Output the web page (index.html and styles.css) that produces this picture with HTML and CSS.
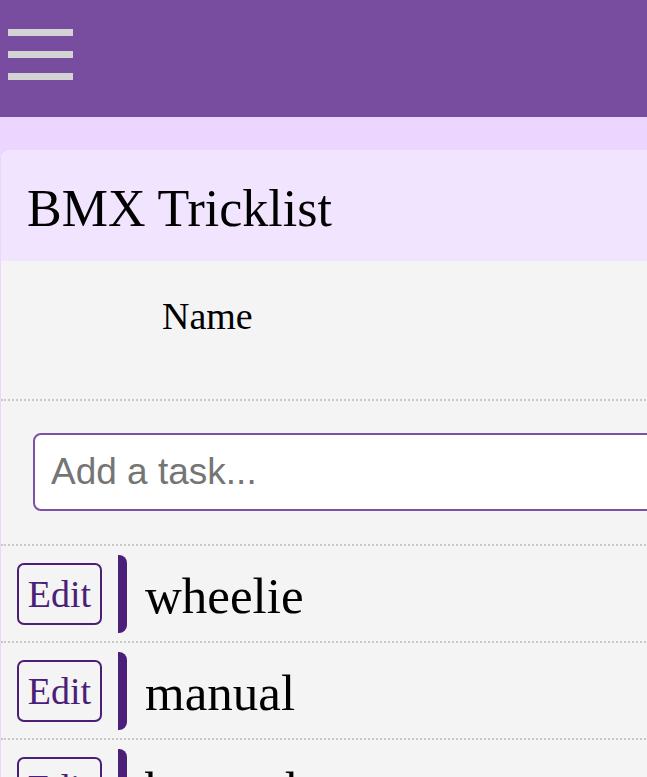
FILE: index.html
```html
<!DOCTYPE html>
<html lang="en">
<head>
<meta charset="utf-8">
<title>BMX Tricklist</title>
<link rel="stylesheet" href="styles.css">
</head>
<body>
<header class="topbar">
  <button class="menu" aria-label="Menu">
    <span class="menu-bar"></span>
    <span class="menu-bar"></span>
    <span class="menu-bar"></span>
  </button>
</header>
<main class="page">
  <section class="card">
    <h1 class="card-title">BMX Tricklist</h1>
    <div class="list">
      <div class="list-head">Name</div>
      <div class="add-row">
        <input class="add-input" type="text" placeholder="Add a task...">
      </div>
      <div class="item">
        <button class="edit-btn">Edit</button>
        <span class="item-bar"></span>
        <span class="item-name">wheelie</span>
      </div>
      <div class="item">
        <button class="edit-btn">Edit</button>
        <span class="item-bar"></span>
        <span class="item-name">manual</span>
      </div>
      <div class="item">
        <button class="edit-btn">Edit</button>
        <span class="item-bar"></span>
        <span class="item-name">bunny hop</span>
      </div>
    </div>
  </section>
</main>
</body>
</html>
```

FILE: styles.css
```css
html, body {
  margin: 0;
  padding: 0;
  overflow: hidden;
  background: #ecd5ff;
  font-family: "Liberation Serif", "Times New Roman", serif;
}

.topbar {
  height: 117px;
  background: #784c9e;
  box-sizing: border-box;
  padding: 29px 0 0 8px;
}

.menu {
  display: flex;
  flex-direction: column;
  gap: 15px;
  padding: 0;
  margin: 0;
  border: 0;
  background: transparent;
}

.menu-bar {
  display: block;
  width: 65px;
  height: 7px;
  background: #d3d3d3;
}

.page {
  padding-top: 33px;
  padding-left: 1px;
}

.card {
  background: #f4f4f4;
  border-top-left-radius: 9px;
  overflow: hidden;
  width: 720px;
}

.card-title {
  margin: 0;
  background: #f1e4ff;
  font-weight: normal;
  font-size: 52px;
  line-height: 58px;
  height: 111px;
  box-sizing: border-box;
  padding: 30px 0 0 26px;
  color: #000;
}

.list-head {
  height: 140px;
  box-sizing: border-box;
  padding: 33px 0 0 161px;
  font-size: 38px;
  line-height: 44px;
  border-bottom: 2px dotted #c8c8c8;
}

.add-row {
  height: 145px;
  box-sizing: border-box;
  display: flex;
  align-items: center;
  padding-left: 32px;
  padding-bottom: 1px;
  border-bottom: 2px dotted #c8c8c8;
}

.add-input {
  width: 680px;
  height: 78px;
  box-sizing: border-box;
  border: 2px solid #7d4fa5;
  border-radius: 8px;
  background: #fff;
  padding: 0 16px;
  font-family: "Liberation Sans", Arial, sans-serif;
  font-size: 37px;
  color: #333;
  outline: none;
}

.add-input::placeholder {
  color: #757575;
}

.item {
  height: 97px;
  box-sizing: border-box;
  display: flex;
  align-items: center;
  padding-left: 16px;
  border-bottom: 2px dotted #c8c8c8;
}

.edit-btn {
  width: 85px;
  height: 62px;
  box-sizing: border-box;
  border: 2px solid #4b1f78;
  border-radius: 7px;
  background: transparent;
  color: #4b1f78;
  font-family: "Liberation Serif", "Times New Roman", serif;
  font-size: 38px;
  padding: 0;
  margin: 0;
  line-height: 1;
}

.item-bar {
  display: block;
  width: 9px;
  height: 78px;
  margin-left: 16px;
  background: #4b1f78;
  border-radius: 0 8px 8px 0;
}

.item-name {
  margin-left: 18px;
  font-size: 51px;
  padding-top: 4px;
  color: #000;
  white-space: nowrap;
}
```
